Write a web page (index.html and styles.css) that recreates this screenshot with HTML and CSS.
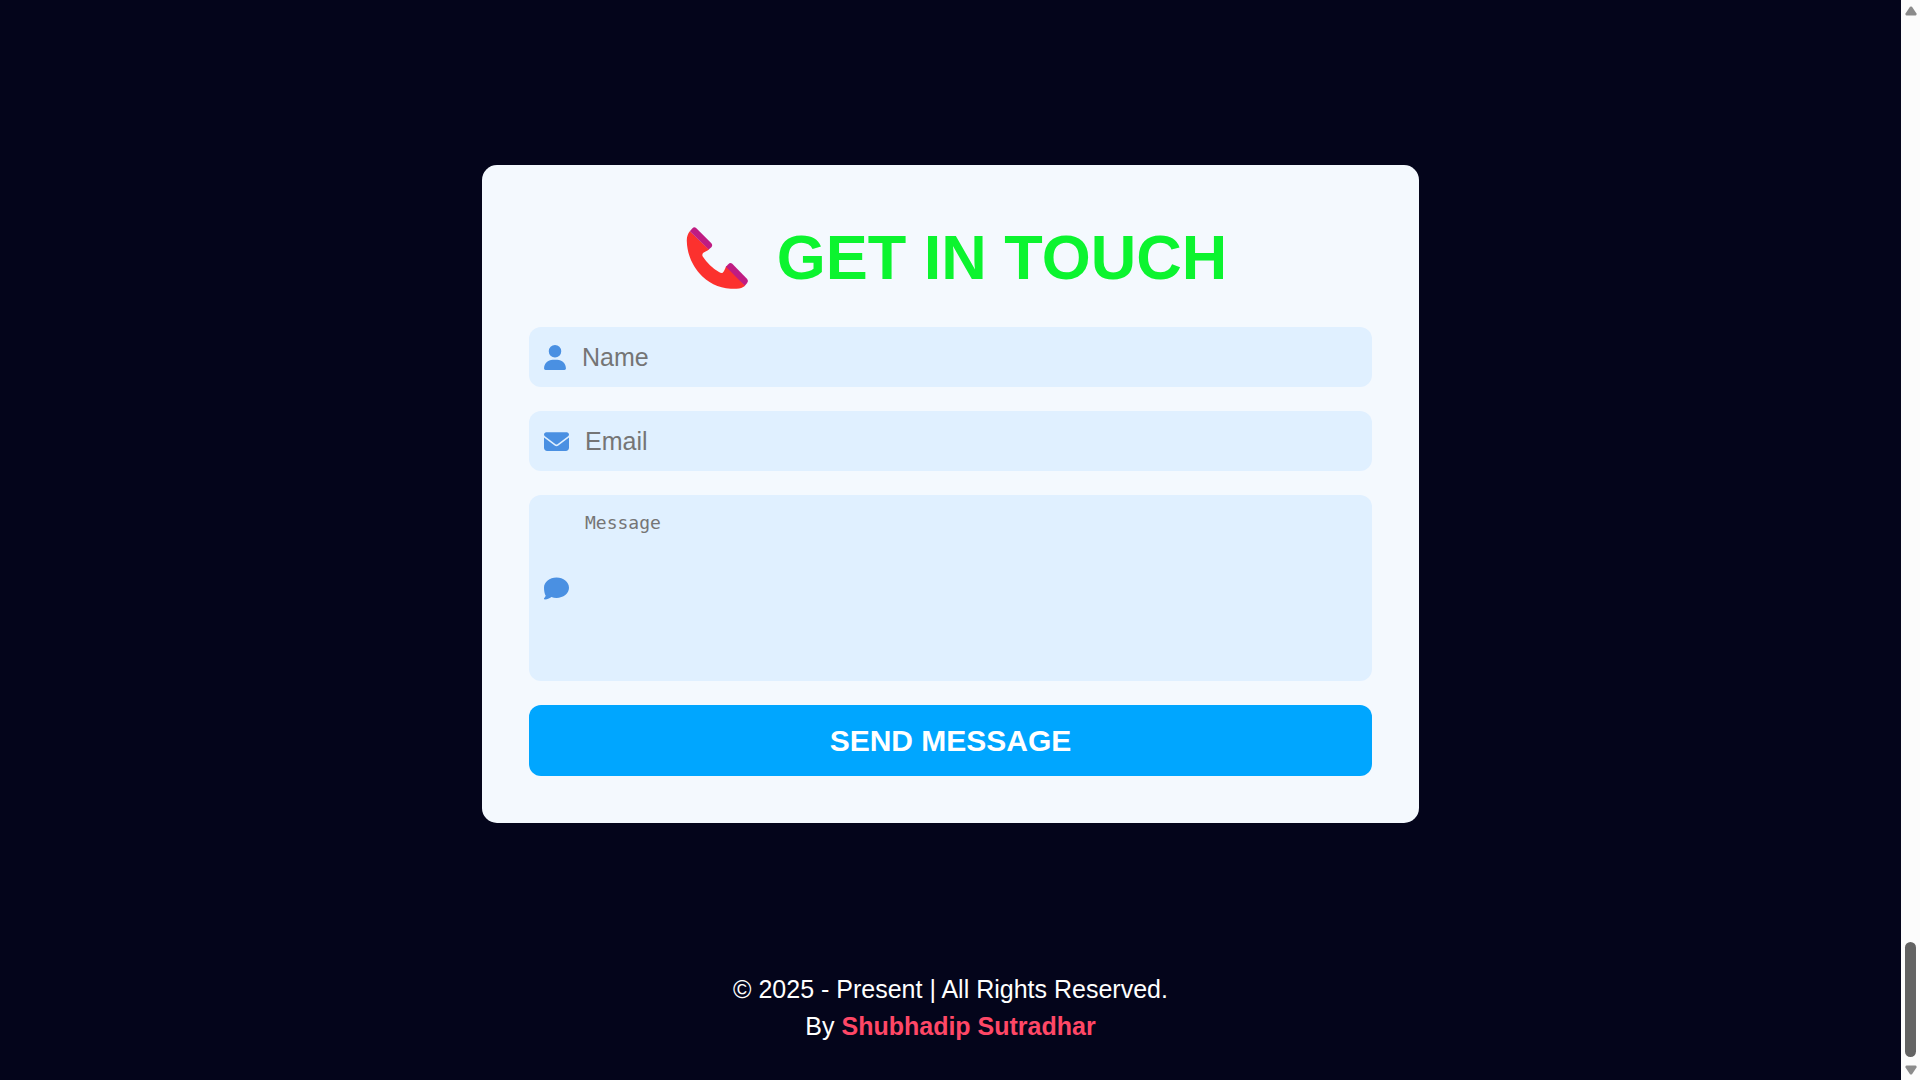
FILE: index.html
```html
<!DOCTYPE html>
<html lang="en">
<head>
  <meta charset="utf-8">
  <meta name="viewport" content="width=device-width, initial-scale=1">
  <title>Get in touch</title>
  <link rel="stylesheet" href="styles.css">
</head>
<body>
  <div class="page">
    <main class="contact">
      <form class="card">
        <h1 class="title">
          <svg class="title-icon" viewBox="45 77 258 187" aria-hidden="true">
            <path fill="#fc312e" d="M92 90C86 98 82 107 83 121C84 160 101 198 130 226C158 252 191 264 233 263.500C244 263 251 260 259 254L204 195L201 196C198 204 195 211 191 215C188 217 184 215 180 213C161 202 143 185 131 166C129 162 129 158 133 155C138 151 144 149 150 145Z"/>
            <path fill="#bf1c82" d="M92 90L100 81Q105 75 111 80L157 126Q162 132 157 138L149 145Z"/>
            <path fill="#bf1c82" d="M201 197L208 189Q214 183 220 188L265 234Q270 240 265 246L258 254Z"/>
          </svg>
          <span>GET IN TOUCH</span>
        </h1>
        <label class="field">
          <svg class="icon icon-user" viewBox="0 0 448 512" role="img" aria-label="Name"><path d="M224 256A128 128 0 1 0 224 0a128 128 0 1 0 0 256zm-45.700 48C79.800 304 0 383.800 0 482.300C0 498.700 13.300 512 29.700 512H418.300c16.400 0 29.700-13.300 29.700-29.700C448 383.800 368.200 304 269.700 304H178.300z"/></svg>
          <input class="input" type="text" placeholder="Name">
        </label>
        <label class="field">
          <svg class="icon" viewBox="0 0 512 512" role="img" aria-label="Email"><path d="M48 64C21.500 64 0 85.500 0 112c0 15.100 7.100 29.300 19.200 38.400L236.800 313.600c11.400 8.500 27 8.500 38.400 0L492.800 150.400c12.100-9.100 19.200-23.300 19.200-38.400c0-26.500-21.500-48-48-48H48zM0 176V384c0 35.300 28.700 64 64 64H448c35.300 0 64-28.700 64-64V176L294.400 339.200c-22.800 17.100-54 17.100-76.800 0L0 176z"/></svg>
          <input class="input" type="email" placeholder="Email">
        </label>
        <label class="field">
          <svg class="icon" viewBox="0 0 512 512" role="img" aria-label="Message"><path d="M512 240c0 114.900-114.600 208-256 208c-37.100 0-72.300-6.400-104.100-17.900c-11.900 8.700-31.300 20.600-54.300 30.600C73.600 471.100 44.700 480 16 480c-6.500 0-12.300-3.900-14.800-9.900c-2.500-6-1.100-12.800 3.400-17.400c.4-.4 1.100-1.100 1.900-2.200c1.800-2 4.400-5.200 7.600-9.300c6-8.300 14.300-20.600 21.200-35.400C13.100 363.700 0 305.300 0 240C0 125.100 114.600 32 256 32s256 93.100 256 208z"/></svg>
          <textarea class="input message" placeholder="Message"></textarea>
        </label>
        <button class="send" type="submit">SEND MESSAGE</button>
      </form>
    </main>
    <footer class="footer">
      <p>© 2025 - Present | All Rights Reserved.</p>
      <p>By <a class="author" href="#">Shubhadip Sutradhar</a></p>
    </footer>
  </div>
  <div class="scrollbar" aria-hidden="true">
    <svg class="arrow" viewBox="0 0 12 10"><path d="M5 .800Q6 0 7 .800L11.500 7.500Q12 9.500 10.500 9.500H1.500Q0 9.500 .500 7.500Z"/></svg>
    <div class="thumb"></div>
    <svg class="arrow" viewBox="0 0 12 10"><path d="M5 9.200Q6 10 7 9.200L11.500 2.500Q12 .500 10.500 .500H1.500Q0 .500 .500 2.500Z"/></svg>
  </div>
</body>
</html>
```
FILE: styles.css
```css
* {
  box-sizing: border-box;
}

body {
  display: flex;
  min-height: 100vh;
  margin: 0;
  background: #04051b;
  color: #fff;
  font-family: "Liberation Sans", Arial, sans-serif;
  font-size: 25px;
}

.page {
  display: flex;
  flex: 1;
  flex-direction: column;
  justify-content: space-between;
}

.contact {
  padding: 165px 24px 47px;
}

.card {
  display: flex;
  flex-direction: column;
  gap: 24px;
  max-width: 937px;
  margin: 0 auto;
  padding: 47px;
  border-radius: 15px;
  background: #f4f9fe;
}

.title {
  display: flex;
  align-items: center;
  justify-content: center;
  gap: 17px;
  margin: 0;
  color: #0cf42f;
  font-size: 63px;
  line-height: 91px;
}

.title-icon {
  width: 86px;
  height: 62px;
}

.field {
  display: flex;
  align-items: center;
  gap: 16px;
  padding: 15px;
  border-radius: 12px;
  background: #e0f0ff;
}

.icon {
  flex: none;
  width: 25px;
  height: 25px;
  fill: #4a90e2;
}

.icon-user {
  width: 22px;
}

.input {
  flex: 1;
  min-width: 0;
  height: 30px;
  padding: 0;
  border: 0;
  outline: 0;
  background: transparent;
  font: inherit;
}

.input::placeholder {
  color: #757575;
}

.message {
  height: 156px;
  resize: none;
  font-family: "DejaVu Sans Mono", monospace;
  font-size: 18px;
  line-height: 26px;
}

.send {
  padding: 15px;
  border: 0;
  border-radius: 12px;
  background: #00a6ff;
  color: #fff;
  font: bold 30px/41px "Liberation Sans", Arial, sans-serif;
}

.footer {
  padding-bottom: 35px;
  line-height: 37px;
  text-align: center;
}

.footer p {
  margin: 0;
}

.author {
  color: #ff4766;
  font-weight: bold;
  text-decoration: none;
}

.scrollbar {
  display: flex;
  flex-direction: column;
  align-items: center;
  gap: 8px;
  width: 19px;
  padding: 6px 0 5px;
  background: #fcfcfc;
}

.arrow {
  width: 12px;
  height: 10px;
  fill: #8b8b8b;
}

.thumb {
  width: 11px;
  height: 115px;
  margin-top: auto;
  border-radius: 6px;
  background: #636363;
}
```
